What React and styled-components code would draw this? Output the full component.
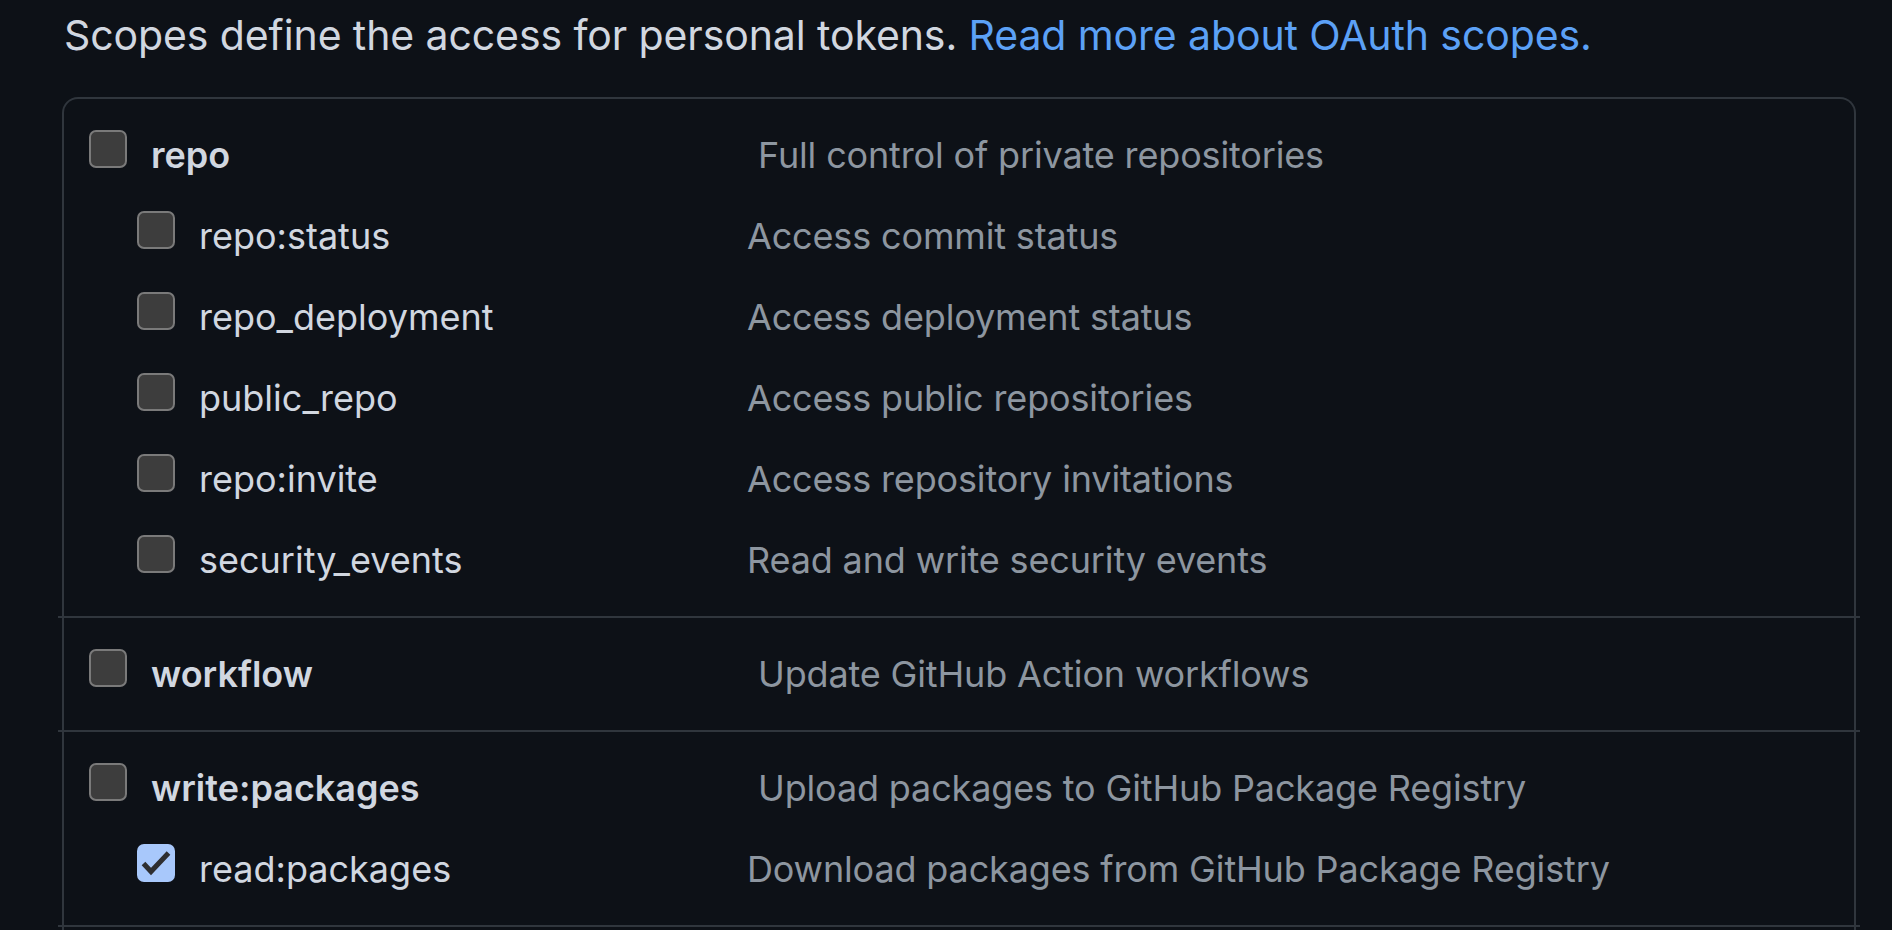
import React from "react";
import styled, { createGlobalStyle } from "styled-components";

const GlobalStyle = createGlobalStyle`
  html, body {
    margin: 0;
    padding: 0;
    background: #0d1117;
    overflow: hidden;
  }
  body {
    font-family: Inter, "Noto Sans", "Liberation Sans", sans-serif;
  }
`;

const Page = styled.div`
  padding: 4px 36px 0 62px;
  min-height: 930px;
  box-sizing: border-box;
  background: #0d1117;
`;

const Intro = styled.p`
  margin: 0 0 30px 2px;
  font-size: 41px;
  line-height: 63px;
  letter-spacing: -0.1px;
  color: #d1d7e0;
  white-space: nowrap;
`;

const Link = styled.a`
  color: #5ca1f6;
  text-decoration: none;
`;

const ScopeBox = styled.div`
  border: 2px solid #30363d;
  border-bottom: none;
  border-radius: 16px 16px 0 0;
  padding-bottom: 24px;
`;

const Section = styled.div`
  padding-top: 31px;
`;

const Divider = styled.div`
  height: 2px;
  margin: 0 -6px;
  background: #30363d;
`;

const Row = styled.div`
  display: flex;
  align-items: baseline;
  height: 81px;
  padding-left: ${(p) => (p.$nested ? 73 : 25)}px;
`;

const Box = styled.span`
  flex: none;
  display: inline-block;
  width: 38px;
  height: 38px;
  box-sizing: border-box;
  border-radius: 7px;
  border: ${(p) => (p.$checked ? "none" : "2.5px solid #7a7a7a")};
  background: ${(p) => (p.$checked ? "#a8c8fb" : "#3d3d3d")};
  position: relative;

  svg {
    position: absolute;
    inset: 0;
  }
`;

const Name = styled.span`
  flex: none;
  width: ${(p) => (p.$nested ? 548 : 607)}px;
  margin-left: 24px;
  font-size: 36px;
  line-height: 1;
  font-weight: ${(p) => (p.$nested ? 400 : 600)};
  color: #d1d7e0;
`;

const Desc = styled.span`
  font-size: 36px;
  line-height: 1;
  letter-spacing: -0.15px;
  color: #8d96a0;
`;

const Checkbox = ({ checked }) => (
  <Box $checked={checked}>
    {checked && (
      <svg width="38" height="38" viewBox="0 0 38 38">
        <path
          d="M6.5 19.5 L14 27.5 L31.5 9"
          fill="none"
          stroke="#2e2e30"
          strokeWidth="5"
        />
      </svg>
    )}
  </Box>
);

const ScopeRow = ({ name, desc, nested, checked }) => (
  <Row $nested={nested}>
    <Checkbox checked={checked} />
    <Name $nested={nested}>{name}</Name>
    <Desc>{desc}</Desc>
  </Row>
);

const groups = [
  [
    { name: "repo", desc: "Full control of private repositories" },
    { name: "repo:status", desc: "Access commit status", nested: true },
    { name: "repo_deployment", desc: "Access deployment status", nested: true },
    { name: "public_repo", desc: "Access public repositories", nested: true },
    { name: "repo:invite", desc: "Access repository invitations", nested: true },
    { name: "security_events", desc: "Read and write security events", nested: true },
  ],
  [{ name: "workflow", desc: "Update GitHub Action workflows" }],
  [
    { name: "write:packages", desc: "Upload packages to GitHub Package Registry" },
    {
      name: "read:packages",
      desc: "Download packages from GitHub Package Registry",
      nested: true,
      checked: true,
    },
  ],
];

const App = () => {
  return (
    <Page>
      <GlobalStyle />
      <Intro>
        Scopes define the access for personal tokens.{" "}
        <Link href="#">Read more about OAuth scopes.</Link>
      </Intro>
      <ScopeBox>
        {groups.map((rows, i) => (
          <React.Fragment key={i}>
            {i > 0 && <Divider />}
            <Section>
              {rows.map((r) => (
                <ScopeRow key={r.name} {...r} />
              ))}
            </Section>
          </React.Fragment>
        ))}
        <Divider />
      </ScopeBox>
    </Page>
  );
};

export default App;
